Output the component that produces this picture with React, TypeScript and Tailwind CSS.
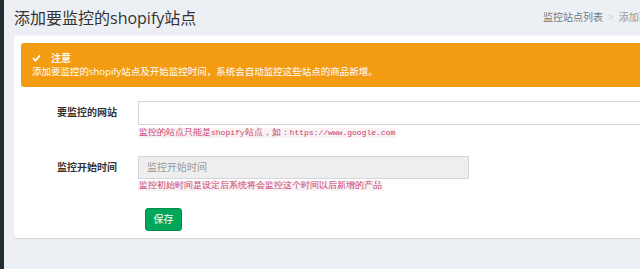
const sans = "font-['Open_Sans','Noto_Sans_CJK_SC',sans-serif]"
const mono = "font-['Liberation_Mono','Noto_Sans_CJK_SC',monospace]"

function Check() {
  return (
    <svg width="9" height="8" viewBox="0 0 9 8" className="shrink-0">
      <path d="M1 4.2 L3.4 6.6 L8 1.4" fill="none" stroke="#fff" strokeWidth="1.8" />
    </svg>
  )
}

export default function App() {
  return (
    <div className={`flex h-[269px] w-[640px] overflow-hidden bg-[#ecf0f5] ${sans}`}>
      <div className="w-[4px] shrink-0 bg-[#222d32]" />
      <div className="w-[720px] shrink-0 pl-[10px]">
        {/* header */}
        <div className="flex h-[35px] items-center">
          <h1 className="w-[529px] shrink-0 text-[16px] leading-none text-[#333]">添加要监控的shopify站点</h1>
          <div className="flex items-center gap-[5px] whitespace-nowrap text-[10px] text-[#777]">
            <span>监控站点列表</span>
            <span className="text-[#ccc]">&gt;</span>
            <span className="text-[#999]">添加要监控的shopify站点</span>
          </div>
        </div>

        {/* box */}
        <div className="rounded-[3px] border-t-[1px] border-[#f4f6f9] bg-white px-[7px] pb-[7px] pt-[7px] shadow-[0_1px_1px_rgba(0,0,0,0.12)]">
          <div className="flex h-[44px] flex-col justify-center rounded-[3px] bg-[#f39c12] px-[11px] text-white">
            <div className="flex items-center gap-[10px] text-[10px] font-bold leading-[13px]">
              <Check />
              <span>注意</span>
            </div>
            <div className="text-[9.5px] leading-[14px]">添加要监控的shopify站点及开始监控时间，系统会自动监控这些站点的商品新增。</div>
          </div>

          <div className="mt-[14px] flex">
            <div className="w-[96px] shrink-0 pt-[5px] text-right text-[10px] font-bold leading-[13px] text-[#333]">要监控的网站</div>
            <div className="ml-[21px] flex-1">
              <div className="h-[24px] w-full border border-[#d2d6de] bg-white" />
              <div className={`mt-[2px] text-[9px] leading-[11px] ${mono}`}>
                <code className="bg-[#f9f2f4] px-[1px] text-[#c9406a]">
                  监控的站点只能是<span className="text-[8px]">shopify</span>站点，如：<span className="text-[8px]">https://www.google.com</span>
                </code>
              </div>
            </div>
          </div>

          <div className="mt-[17px] flex">
            <div className="w-[96px] shrink-0 pt-[5px] text-right text-[10px] font-bold leading-[13px] text-[#333]">监控开始时间</div>
            <div className="ml-[21px] flex-1">
              <div className="flex h-[23px] w-[331px] items-center border border-[#d2d6de] bg-[#eee] px-[8px] text-[10px] text-[#999]">
                监控开始时间
              </div>
              <div className={`mt-[2px] text-[9px] leading-[11px] ${mono}`}>
                <code className="bg-[#f9f2f4] px-[1px] text-[#c9406a]">
                  监控初始时间是设定后系统将会监控这个时间以后新增的产品
                </code>
              </div>
            </div>
          </div>

          <div className="mt-[13px] pl-[124px]">
            <button className="h-[23px] w-[37px] rounded-[3px] border border-[#008d4c] bg-[#00a65a] text-[10px] text-white">
              保存
            </button>
          </div>
        </div>
      </div>
    </div>
  )
}
